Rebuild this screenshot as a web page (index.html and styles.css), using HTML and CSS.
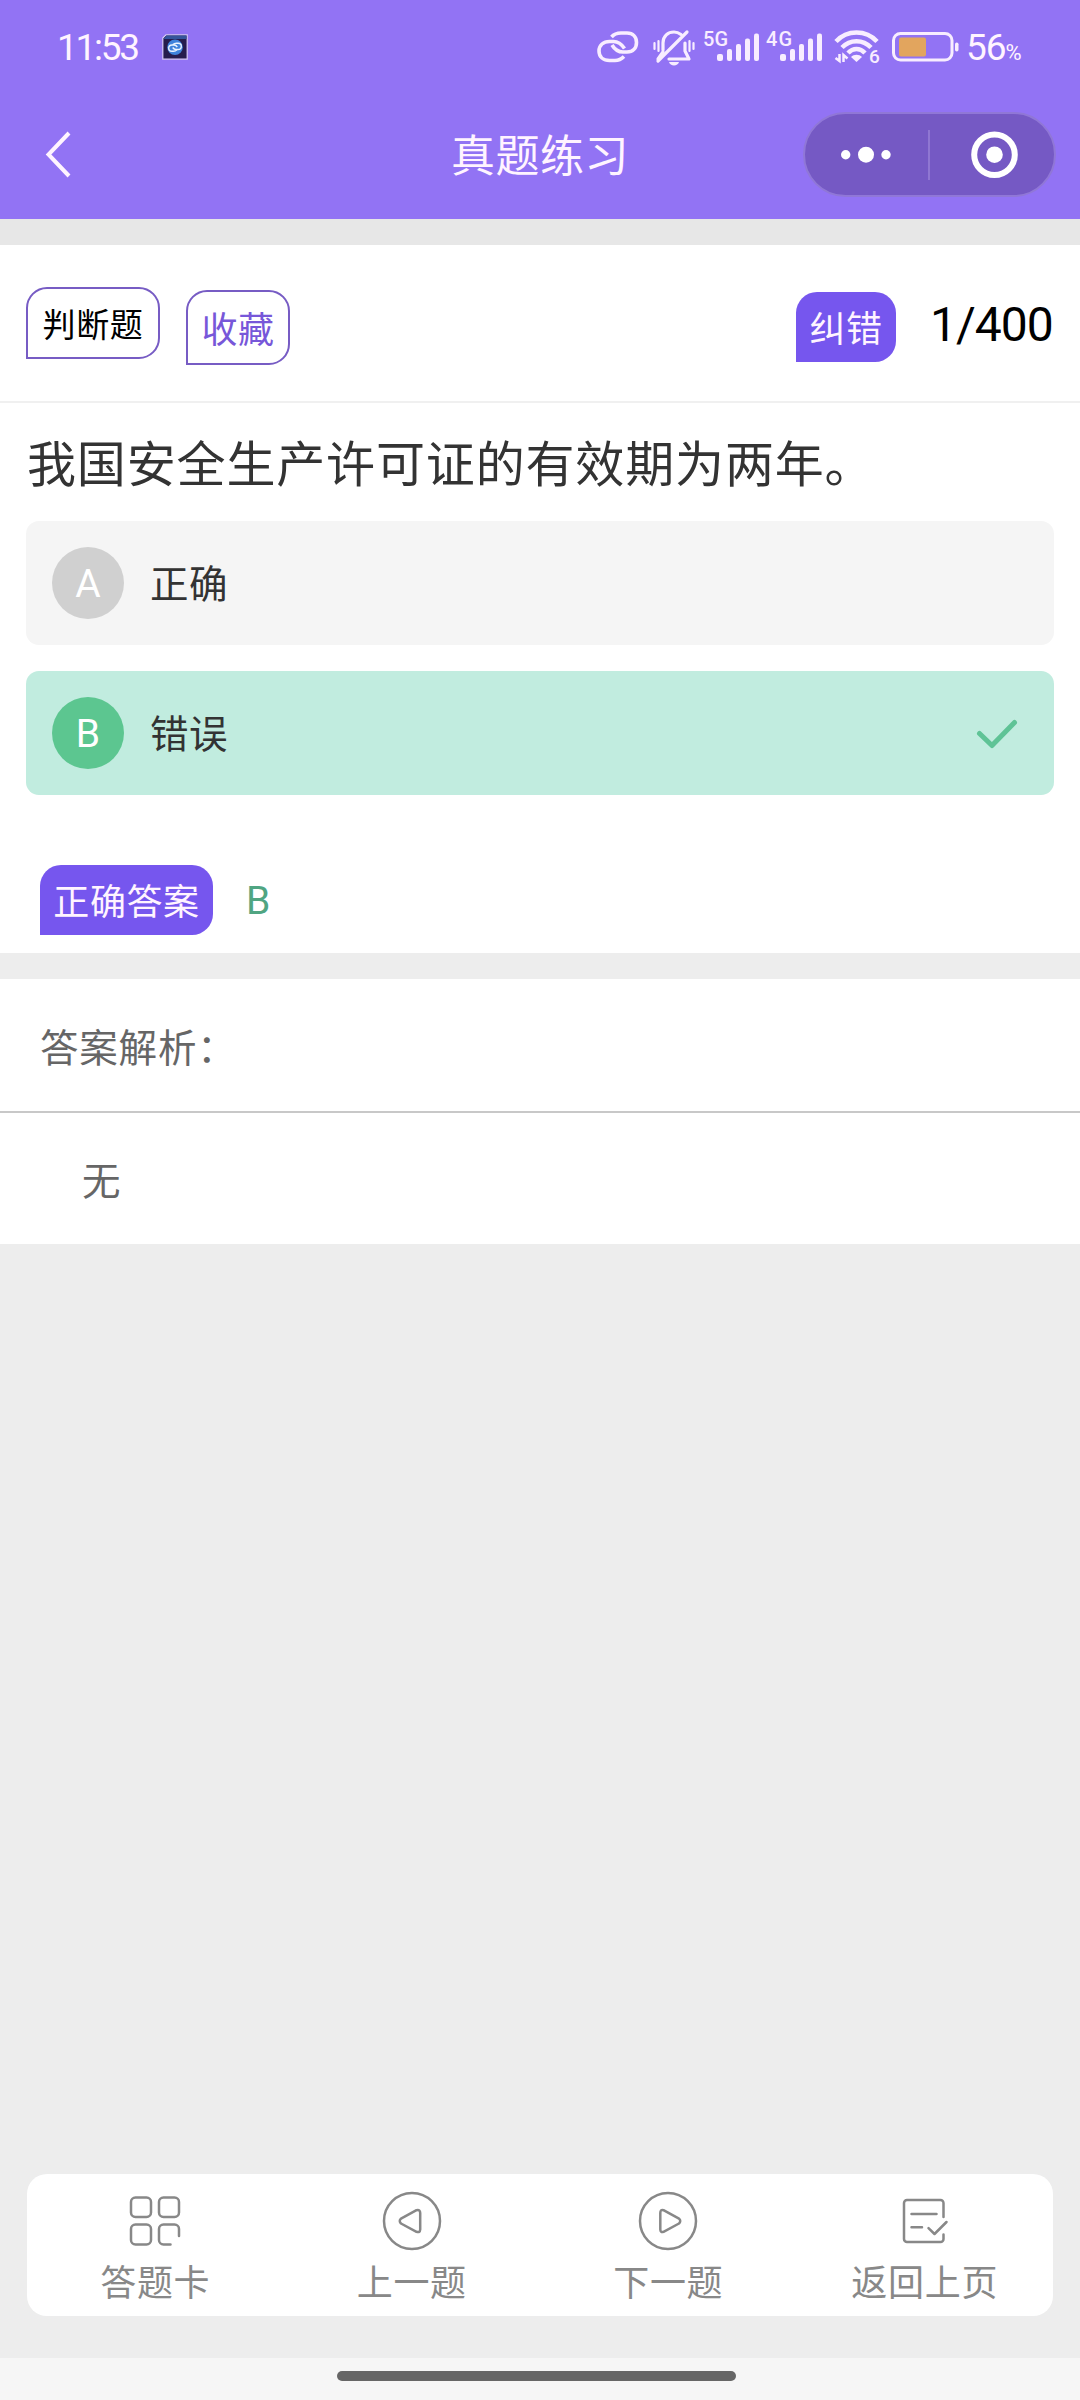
FILE: index.html
```html
<!DOCTYPE html>
<html lang="zh-CN">
<head>
<meta charset="utf-8">
<title>真题练习</title>
<link rel="stylesheet" href="styles.css">
</head>
<body>
<div class="screen">
  <header class="header">
    <div class="status">
      <span class="time">11:53</span>
      <svg class="app-icon" width="26" height="26" viewBox="0 0 26 26">
        <path d="M4 .8H25.2V25.2H.8V4Z" fill="#261c4d" stroke="#d9ccfa" stroke-width="1.2"/>
        <path d="M4.5 1.5H24.5V5H1.5Z" fill="#34549b"/>
        <circle cx="13" cy="13.3" r="7.8" fill="#3f83dc"/>
        <path d="M11 10.500c1-1 2-1.300 3.500-1.300h1.500c2 0 3.300 1.300 3.300 3s-1.300 3.300-3.300 3.300h-2c-1.500 0-2.500-.8-3.300-2M15 15.800c-1 1-2 1.500-3.500 1.500H10c-2 0-3.300-1.300-3.300-3s1.300-3.300 3.300-3.300h2c1.500 0 2.500.8 3.300 2" fill="none" stroke="#eaf3ff" stroke-width="1.400"/>
      </svg>
      <div class="status-icons">
        <svg class="i-link" width="42" height="32" viewBox="0 0 42 32" fill="none" stroke="#f8edff" stroke-width="3.600">
          <path d="M14.500 6C17 3 20 2 24 2h6c6 0 9.500 4 9.500 9.500S36 21 30 21h-4c-5 0-8-2-11-7"/>
          <path d="M27 25.500c-3 3-5 4-9 4h-5.500C6.500 29.500 2 26 2 20s4.500-9.500 10.500-9.500h4c5 0 8 2.500 11 7"/>
        </svg>
        <svg class="i-bell" width="42" height="36" viewBox="0 0 42 36" fill="none" stroke="#f8edff" stroke-width="3.200" stroke-linecap="round" stroke-linejoin="round">
          <path d="M10 20V13C10 6 15 2 21 2c3 0 5 1 7 2.500M32 13v8l4 8H16M34 2L5 31"/>
          <path d="M10 22L5 29"/>
          <path d="M16 32c1 4.500 9 4.500 10 0z" fill="#f8edff" stroke="none"/>
          <path d="M1.500 13v6M5.500 11v10M36.500 11v10M40.500 13v6" stroke-width="2.200"/>
        </svg>
        <svg class="i-signal" width="57" height="32" viewBox="0 0 57 32" fill="#f8edff">
          <text class="net" x="0" y="15.500" textLength="25">5G</text>
          <rect x="14" y="24" width="6" height="7" rx="2"/><rect x="24" y="19" width="5" height="12" rx="2"/><rect x="33" y="14" width="5" height="17" rx="2"/><rect x="42" y="8.500" width="5" height="22.500" rx="2"/><rect x="51" y="3.500" width="5" height="27.500" rx="2"/>
        </svg>
        <svg class="i-signal" width="57" height="32" viewBox="0 0 57 32" fill="#f8edff">
          <text class="net" x="0" y="15.500" textLength="26">4G</text>
          <rect x="14" y="24" width="6" height="7" rx="2"/><rect x="24" y="19" width="5" height="12" rx="2"/><rect x="33" y="14" width="5" height="17" rx="2"/><rect x="42" y="8.500" width="5" height="22.500" rx="2"/><rect x="51" y="3.500" width="5" height="27.500" rx="2"/>
        </svg>
        <svg class="i-wifi" width="46" height="36" viewBox="0 0 46 36" fill="none" stroke="#f8edff" stroke-width="4.500">
          <path d="M2 12.500C13 .5 32 .5 43 12.500M8 18.500c8-8.500 21-8.500 29 0M14 24c5-5.500 12-5.500 17 0"/>
          <path d="M17 28c3-3 8-3 11 0l-5.500 5z" fill="#f8edff" stroke="none"/>
          <path d="M5.500 25v7L1.500 29M9.500 33v-7l4 3.500" stroke-width="2.500"/>
          <text class="wifi-gen" x="35" y="34">6</text>
        </svg>
        <svg class="i-battery" width="68" height="30" viewBox="0 0 68 30">
          <rect x="1.500" y="1.500" width="58.500" height="26.500" rx="7" fill="none" stroke="#f8edff" stroke-width="3"/>
          <rect x="7" y="5.500" width="27" height="19" rx="2" fill="#e2a55e"/>
          <rect x="63" y="10.500" width="3.500" height="9" rx="1.700" fill="#f8edff"/>
        </svg>
        <span class="percent">56<small>%</small></span>
      </div>
    </div>
    <div class="nav">
      <svg class="back" width="28" height="48" viewBox="0 0 28 48" fill="none" stroke="#fff4ff" stroke-width="4"><path d="M25 2L4.500 23.500L25 45"/></svg>
      <h1 class="title">真题练习</h1>
      <div class="capsule">
        <svg width="253" height="85" viewBox="0 0 253 85" fill="#fff">
          <rect x="1" y="1" width="251" height="83" rx="41.500" fill="#7559c4" stroke="#9077d7" stroke-width="2"/>
          <circle cx="42.700" cy="42.700" r="4.700"/><circle cx="63" cy="42.700" r="8"/><circle cx="83" cy="42.700" r="4.700"/>
          <path d="M126 18v50" stroke="#957dd5" stroke-width="1.700"/>
          <circle cx="191.500" cy="42.700" r="20.300" fill="none" stroke="#fff" stroke-width="6"/><circle cx="191.500" cy="42.700" r="8.300"/>
        </svg>
      </div>
    </div>
  </header>
  <div class="gap gap-top"></div>
  <section class="meta">
    <span class="tag tag-type">判断题</span>
    <span class="tag tag-fav">收藏</span>
    <span class="tag tag-solid tag-fix">纠错</span>
    <span class="counter">1/400</span>
  </section>
  <main class="question">
    <p class="stem">我国安全生产许可证的有效期为两年。</p>
    <div class="option">
      <span class="letter">A</span><span class="option-text">正确</span>
    </div>
    <div class="option option-right">
      <span class="letter">B</span><span class="option-text">错误</span>
      <svg class="check" width="42" height="32" viewBox="0 0 42 32" fill="none" stroke="#5fc396" stroke-width="5" stroke-linecap="round" stroke-linejoin="round"><path d="M3.500 16.500L16 28.500L38.500 5.500"/></svg>
    </div>
    <div class="answer">
      <span class="tag tag-solid">正确答案</span><span class="answer-letter">B</span>
    </div>
  </main>
  <div class="gap"></div>
  <section class="analysis">
    <div class="analysis-head">答案解析：</div>
    <div class="analysis-body">无</div>
  </section>
  <nav class="toolbar">
    <div class="tool">
      <svg width="60" height="60" viewBox="0 0 60 60"><g><rect x="6" y="6.500" width="20" height="19.500" rx="4.500"/><rect x="34" y="6.500" width="20" height="19.500" rx="4.500"/><rect x="6" y="33.500" width="20" height="20" rx="4.500"/><path d="M54 45V38a4.500 4.500 0 0 0-4.500-4.500H38.500A4.500 4.500 0 0 0 34 38V49a4.500 4.500 0 0 0 4.500 4.500H45.500"/></g></svg>
      <span>答题卡</span>
    </div>
    <div class="tool">
      <svg width="60" height="60" viewBox="0 0 60 60"><circle cx="30" cy="30" r="28"/><path d="M19 27.600L34.500 19.200Q38.200 18.200 38.200 22V38.500Q38 42 34.500 40.800L19 32.500Q16.500 30 19 27.600Z"/></svg>
      <span>上一题</span>
    </div>
    <div class="tool">
      <svg width="60" height="60" viewBox="0 0 60 60"><circle cx="30" cy="30" r="28"/><path d="M41 27.600L25.500 19.200Q22.300 18.200 22.300 22V38.500Q22.500 42 25.500 40.800L41 32.500Q43.500 30 41 27.600Z"/></svg>
      <span>下一题</span>
    </div>
    <div class="tool">
      <svg width="60" height="60" viewBox="0 0 60 60"><path d="M48.500 26V12a3 3 0 0 0-3-3H12a3 3 0 0 0-3 3V48a3 3 0 0 0 3 3H45.500a3 3 0 0 0 3-3V43.500M16.500 23H41.500M16.500 36.300H27M33.500 37.200L39.500 43L51.500 31"/></svg>
      <span>返回上页</span>
    </div>
  </nav>
  <footer class="home"><div class="home-pill"></div></footer>
</div>
</body>
</html>
```
FILE: styles.css
```css
* { box-sizing: border-box; }
body { margin: 0; background: #ededed; }
svg { display: block; flex: none; overflow: visible; }

.screen {
  width: 1080px;
  height: 2400px;
  display: flex;
  flex-direction: column;
  background: #ededed;
  font-family: Roboto, "Noto Sans CJK SC", sans-serif;
  color: #333;
  white-space: nowrap;
}

.header { height: 219px; flex: none; background: #9273f4; color: #fff4ff; }
.status { height: 96px; display: flex; align-items: flex-start; padding: 0 57px 0 57px; }
.time { width: 105px; padding-top: 26px; font-size: 37px; line-height: 44px; letter-spacing: -2.300px; }
.app-icon { margin-top: 34px; }
.status-icons { margin-left: auto; display: flex; align-items: flex-start; }
.i-link { margin: 31px 14px 0 0; }
.i-bell { margin: 30px 8px 0 0; }
.i-signal { margin: 30px 6px 0 0; }
.i-wifi { margin: 29px 12px 0 5px; }
.i-battery { margin: 32px 6px 0 0; }
.net { font-size: 20px; font-weight: 500; }
.wifi-gen { font-size: 19px; font-weight: 500; fill: #f8edff; stroke: none; }
.percent { width: 57px; padding-top: 26px; font-size: 37px; line-height: 44px; letter-spacing: -1px; }
.percent small { font-size: 22px; }

.nav { height: 123px; display: grid; grid-template-columns: 1fr auto 1fr; align-items: start; padding: 0 24px 0 44px; }
.back { margin-top: 35px; }
.title { margin: 29px 0 0 -20px; font-size: 44px; line-height: 64px; font-weight: 400; letter-spacing: .5px; }
.capsule { justify-self: end; margin-top: 16px; }

.gap { height: 26px; flex: none; background: #ededed; }
.gap-top { background: #e7e7e7; }

.meta { height: 158px; flex: none; display: flex; align-items: flex-start; padding: 0 26px; background: #fff; border-bottom: 2px solid #f0f0f0; }
.tag {
  display: flex;
  align-items: center;
  justify-content: center;
  height: 70px;
  padding-bottom: 2px;
  border-radius: 21px 21px 21px 0;
  font-size: 36px;
  letter-spacing: .6px;
}
.tag-type { width: 134px; height: 72px; margin-top: 42px; border: 2.500px solid #775cc4; color: #000; font-size: 33px; padding-bottom: 1px; }
.tag-fav { width: 104px; height: 75px; margin: 45px 0 0 26px; border: 2.500px solid #775cc4; color: #7757d9; }
.tag-solid { background: #7656ee; color: #fff4ff; }
.tag-fix { width: 100px; margin: 47px 0 0 auto; }
.counter { width: 124px; margin: 52px 0 0 34px; font-size: 48px; line-height: 56px; letter-spacing: -1px; color: #000; }

.question { height: 550px; flex: none; padding: 0 26px; background: #fff; }
.stem { margin: 0; padding: 27px 0 19px 1px; font-size: 49px; line-height: 72px; letter-spacing: .85px; }
.option { height: 124px; margin-bottom: 26px; display: flex; align-items: center; padding: 0 36px 0 26px; border-radius: 13px; background: #f5f5f5; }
.letter { width: 72px; height: 72px; margin-right: 26px; border-radius: 50%; background: #d0d0d0; color: #fff; font-size: 39px; line-height: 75px; text-align: center; }
.option-text { padding-top: 4px; font-size: 38.500px; line-height: 60px; letter-spacing: .5px; }
.option-right { background: #c1ecdf; }
.option-right .letter { background: #5cc690; }
.check { margin-left: auto; }
.answer { display: flex; align-items: center; padding: 44px 0 0 14px; }
.answer .tag { width: 173px; }
.answer-letter { margin-left: 33px; padding-top: 2px; font-size: 39px; color: #50a582; }

.analysis { flex: none; height: 265px; background: #fff; color: #666; font-size: 38.500px; line-height: 60px; letter-spacing: .8px; }
.analysis-head { height: 134px; padding: 40px 0 0 40px; border-bottom: 2px solid #c8c8c8; }
.analysis-body { padding: 39px 0 0 82px; }

.toolbar { height: 142px; flex: none; margin: auto 27px 42px; display: grid; grid-template-columns: repeat(4, 1fr); background: #fff; border-radius: 20px; color: #888; }
.tool { display: flex; flex-direction: column; align-items: center; gap: 3px; padding-top: 17px; font-size: 36px; line-height: 60px; letter-spacing: .7px; }
.tool svg { fill: none; stroke: #888; stroke-width: 2.500; stroke-linecap: round; stroke-linejoin: round; }
.home { height: 42px; flex: none; padding-top: 13px; background: #f6f6f6; }
.home-pill { width: 399px; height: 10px; margin: 0 auto 0 337px; border-radius: 5px; background: #666; }
```
